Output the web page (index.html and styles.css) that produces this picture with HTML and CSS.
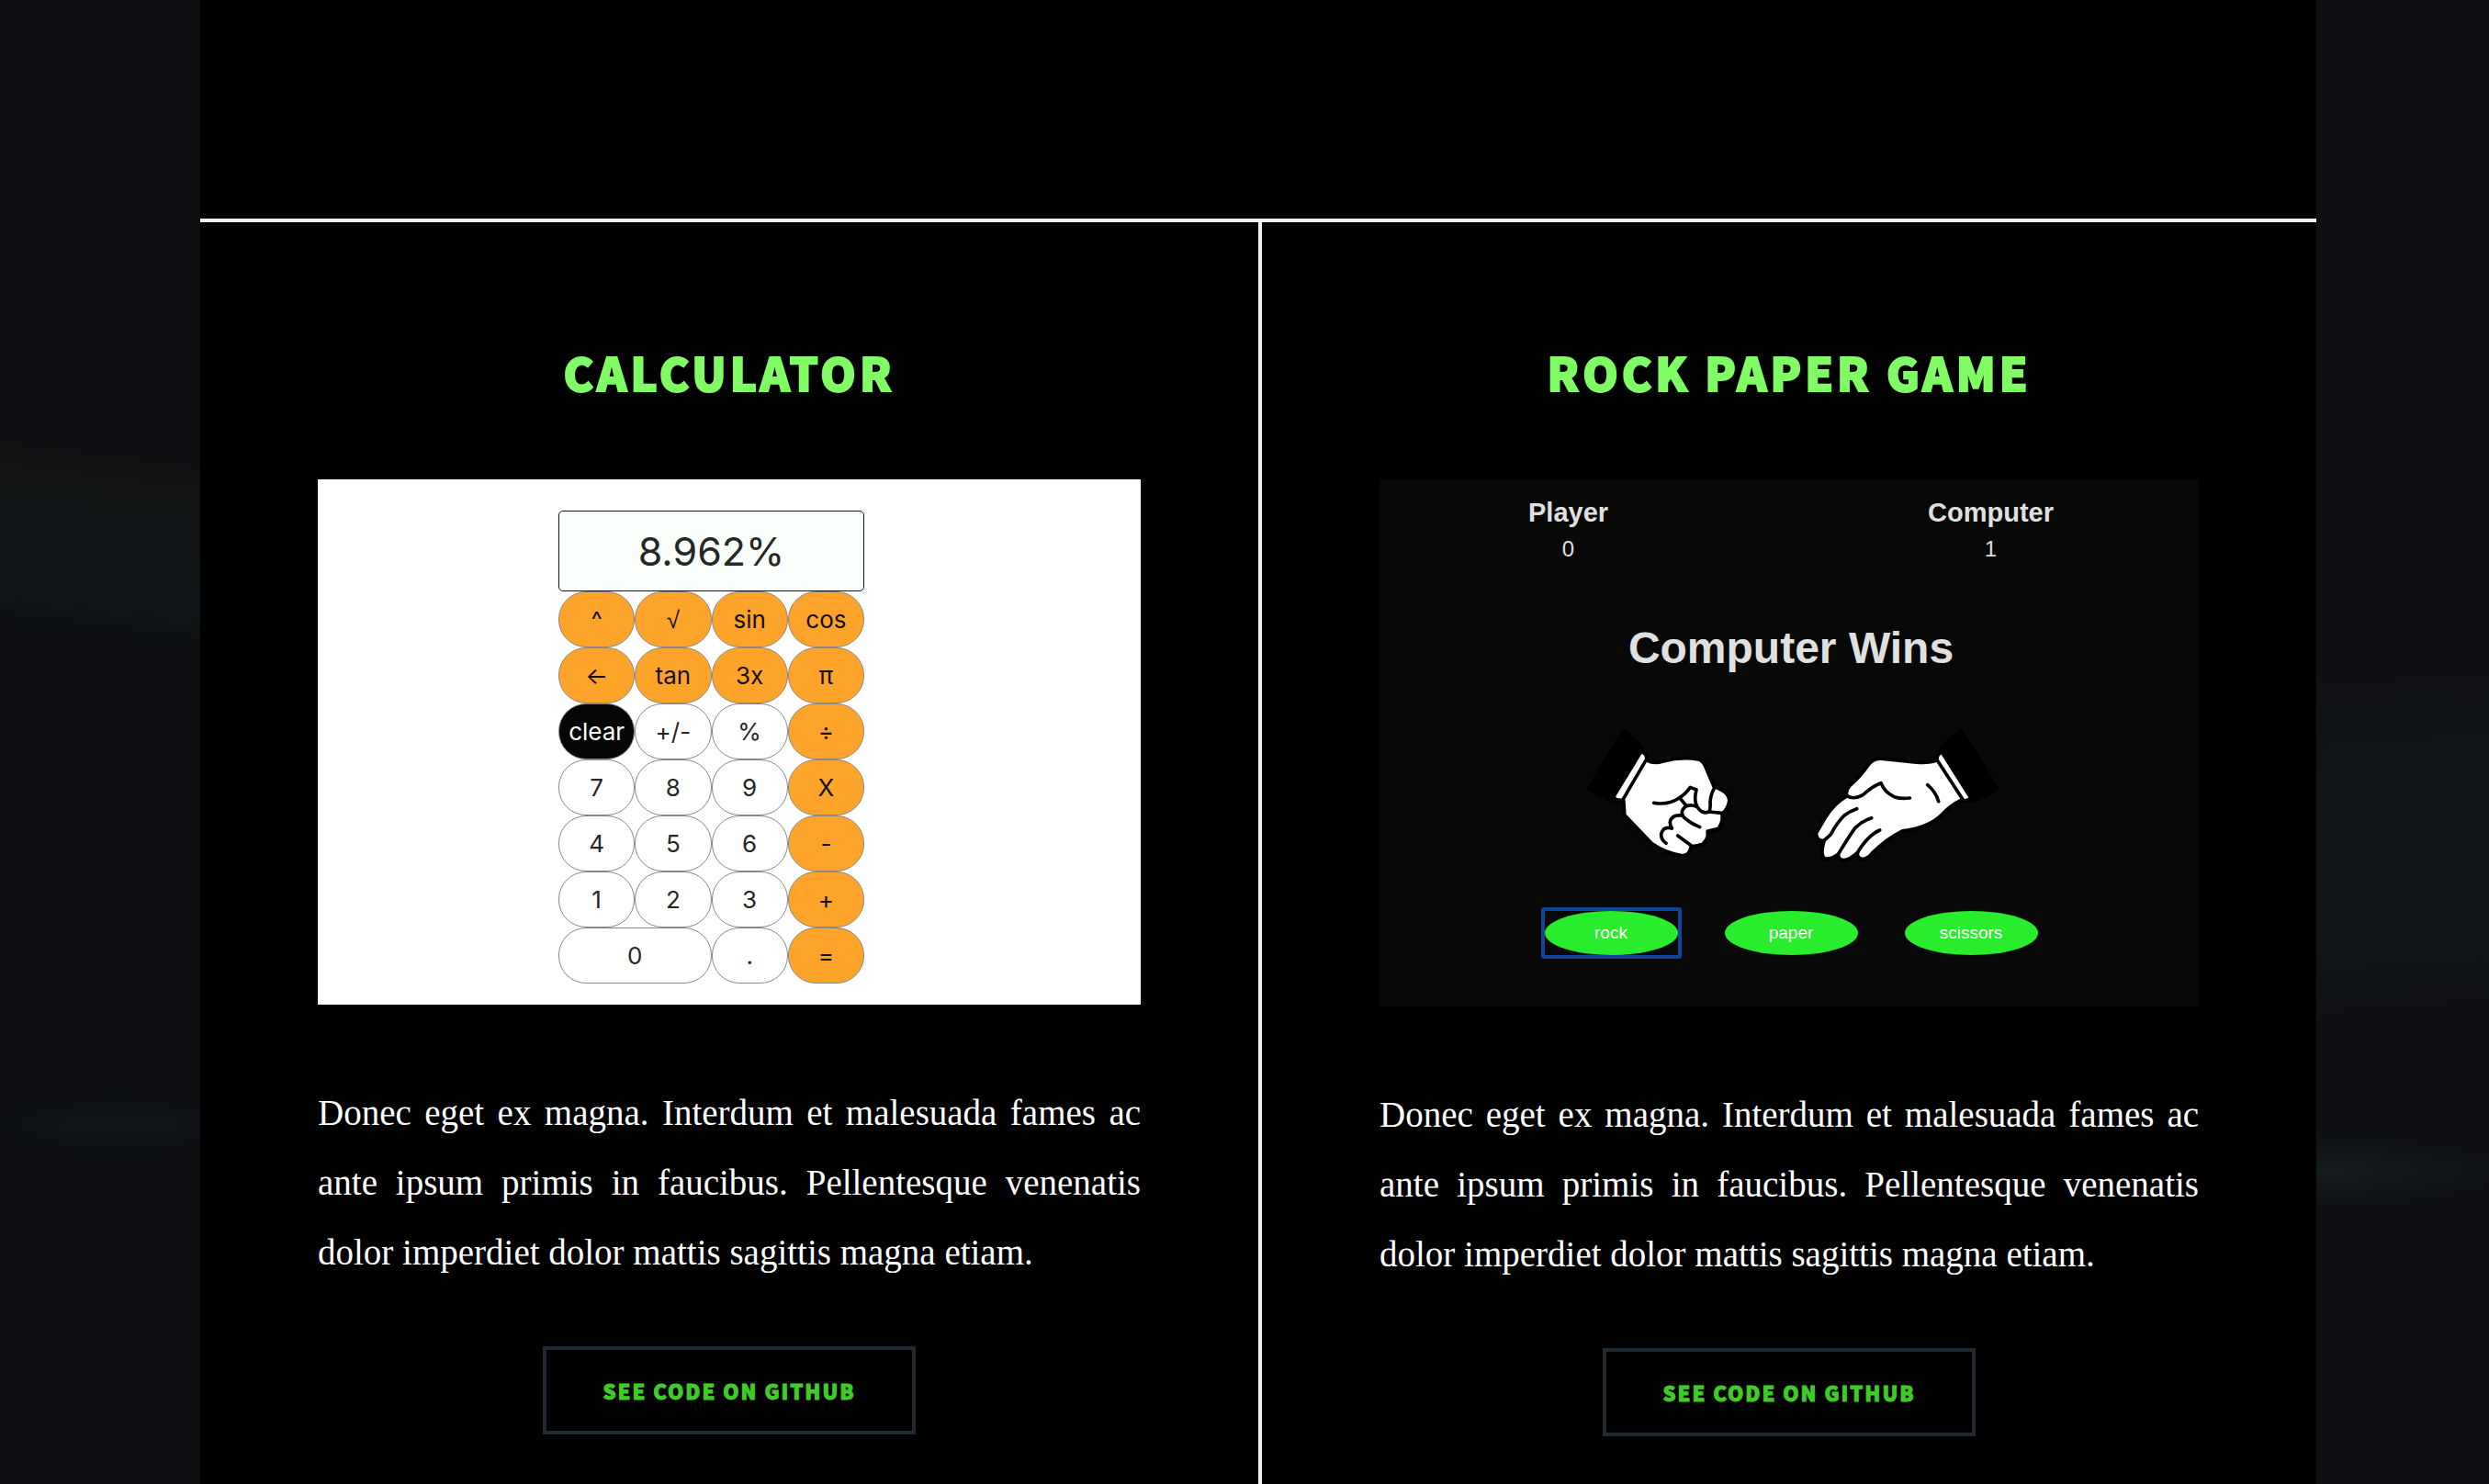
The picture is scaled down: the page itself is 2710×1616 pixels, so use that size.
FILE: index.html
```html
<!DOCTYPE html>
<html lang="en">
<head>
<meta charset="utf-8">
<meta name="viewport" content="width=device-width, initial-scale=1">
<title>Projects</title>
<link rel="stylesheet" href="styles.css">
</head>
<body>
<main class="wrapper">
  <div class="intro"></div>
  <section class="posts">
    <article class="post">
      <h2 class="post-title">Calculator</h2>
      <div class="preview preview-calculator">
        <div class="calculator">
          <output class="display">8.962%</output>
          <button class="key op" type="button">^</button>
          <button class="key op root" type="button">√</button>
          <button class="key op" type="button">sin</button>
          <button class="key op" type="button">cos</button>
          <button class="key op" type="button">←</button>
          <button class="key op" type="button">tan</button>
          <button class="key op" type="button">3x</button>
          <button class="key op" type="button">π</button>
          <button class="key clear" type="button">clear</button>
          <button class="key" type="button">+/-</button>
          <button class="key" type="button">%</button>
          <button class="key op" type="button">÷</button>
          <button class="key" type="button">7</button>
          <button class="key" type="button">8</button>
          <button class="key" type="button">9</button>
          <button class="key op" type="button">X</button>
          <button class="key" type="button">4</button>
          <button class="key" type="button">5</button>
          <button class="key" type="button">6</button>
          <button class="key op" type="button">-</button>
          <button class="key" type="button">1</button>
          <button class="key" type="button">2</button>
          <button class="key" type="button">3</button>
          <button class="key op" type="button">+</button>
          <button class="key wide" type="button">0</button>
          <button class="key" type="button">.</button>
          <button class="key op" type="button">=</button>
        </div>
      </div>
      <p class="post-text">Donec eget ex magna. Interdum et malesuada fames ac ante ipsum primis in faucibus. Pellentesque venenatis dolor imperdiet dolor mattis sagittis magna etiam.</p>
      <a class="code-link" href="#calculator">See code on GitHub</a>
    </article>
    <article class="post">
      <h2 class="post-title">Rock Paper Game</h2>
      <div class="preview preview-game">
        <div class="scores">
          <div class="score"><h3 class="score-name">Player</h3><p class="score-value">0</p></div>
          <div class="score"><h3 class="score-name">Computer</h3><p class="score-value">1</p></div>
        </div>
        <p class="result">Computer Wins</p>
        <svg class="hands" viewBox="0 0 1500 540" role="img" aria-label="Rock against paper">
          <g stroke-linecap="round" stroke-linejoin="round">
            <path fill="#000" d="M202 68L272 130V165L172 305L158 310L80 270Z"/>
            <path fill="#fff" stroke="#000" stroke-width="12" d="M257 150Q266 142 277 157L280 174Q304 186 330 177Q390 160 448 170Q463 175 471 194L499 260Q548 276 549 306Q545 332 525 350Q530 375 512 398Q498 408 478 409Q482 430 460 449Q446 454 424 456Q418 488 392 485Q340 477 296 447L206 353L203 306L187 304Q172 305 171 291Z"/>
            <path fill="none" stroke="#000" stroke-width="11" d="M277 172L200 304M302 313Q350 321 386 296Q404 285 421 262L441 270Q430 313 450 334Q464 350 482 342Q488 333 486 310Q488 285 499 266M482 342L524 346M386 296L407 321M442 325Q407 312 395 338Q390 356 411 369Q427 382 452 392M392 354Q362 350 355 374Q354 384 361 396M361 396Q335 388 327 411Q322 430 342 445M380 420L428 455M478 405L515 397"/>
            <path fill="#000" d="M1308 68L1236 126L1230 160L1335 310L1352 312L1432 270Z"/>
            <path fill="#fff" stroke="#000" stroke-width="12" d="M1243 147Q1234 148 1228 160L1226 173Q1204 183 1160 180L1045 168Q1015 166 998 194Q978 225 944 254Q927 272 932 290Q888 316 862 360L832 412Q832 438 858 436Q844 486 861 495Q878 500 904 481Q904 501 925 500Q942 498 967 476Q965 495 986 497Q1002 495 1016 477Q1060 432 1114 405Q1200 395 1245 350Q1268 323 1308 303Q1322 311 1338 297Z"/>
            <path fill="none" stroke="#000" stroke-width="11" d="M1228 174L1312 303M932 290Q955 304 985 287Q1016 258 1044 248Q1056 279 1087 293Q1111 301 1138 297M1196 254Q1223 277 1232 308M858 436L880 416Q900 378 924 354Q942 340 965 332M904 481Q937 426 960 394Q982 373 1013 362M967 476Q1000 420 1040 402"/>
          </g>
        </svg>
        <div class="moves">
          <button class="move selected" type="button">rock</button>
          <button class="move" type="button">paper</button>
          <button class="move" type="button">scissors</button>
        </div>
      </div>
      <p class="post-text">Donec eget ex magna. Interdum et malesuada fames ac ante ipsum primis in faucibus. Pellentesque venenatis dolor imperdiet dolor mattis sagittis magna etiam.</p>
      <a class="code-link" href="#rock-paper">See code on GitHub</a>
    </article>
  </section>
</main>
</body>
</html>
```
FILE: styles.css
```css
*, *::before, *::after { box-sizing: border-box; }

body {
  margin: 0;
  padding: 0 188px 0 218px;
  min-height: 100vh;
  background:
    radial-gradient(ellipse 240px 44px at 93% 1275px, #141b1f, transparent),
    radial-gradient(ellipse 160px 36px at 130px 1225px, #0f161a, transparent),
    linear-gradient(187deg, transparent 480px, #111314 540px, #0f1518 660px, transparent 710px) left / 218px 100% no-repeat,
    linear-gradient(176deg, transparent 700px, #111518 860px, #111518 1020px, transparent 1130px) right / 188px 100% no-repeat,
    #0e0f12;
}

.wrapper {
  background: #000;
  min-height: 100vh;
}

.intro {
  height: 242px;
  border-bottom: 4px solid #f0f0f0;
}

.posts {
  display: grid;
  grid-template-columns: 1fr 1fr;
}

.post {
  display: flex;
  flex-direction: column;
  align-items: center;
  padding: 128px;
}

.post + .post { border-left: 4px solid #f0f0f0; }

.post-title {
  margin: 0 0 82px;
  color: #80fc64;
  font: 900 49px/70px "Noto Sans CJK JP", sans-serif;
  letter-spacing: 4px;
  text-transform: uppercase;
  -webkit-text-stroke: 2px #80fc64;
}

.preview {
  display: flex;
  flex-direction: column;
  align-items: center;
  width: 100%;
}

.preview-calculator {
  padding: 34px 39px 23px 0;
  background: #fff;
}

.calculator {
  display: grid;
  grid-template-columns: repeat(4, 1fr);
  grid-template-rows: 88px;
  grid-auto-rows: 61px;
  width: 333px;
  font-family: Inter, sans-serif;
}

.display {
  grid-column: span 4;
  display: flex;
  align-items: center;
  justify-content: center;
  border: 1px solid #111;
  border-radius: 5px;
  background: #fafffc;
  color: #262626;
  font-size: 43px;
}

.key {
  padding: 0;
  border: 1px solid #888;
  border-radius: 30px;
  background: #fff;
  color: #262626;
  font: 400 26px/32px Inter, sans-serif;
}

.op { background: #ffa42a; color: #111; }
.root { font-family: "Liberation Sans", sans-serif; }
.clear { background: #060606; color: #fff; }
.wide { grid-column: span 2; }

.preview-game {
  padding: 16px 0 56px 4px;
  background: #080808;
  color: #e0e0e0;
  font-family: "Liberation Sans", sans-serif;
}

.scores {
  display: flex;
  justify-content: space-between;
  width: 100%;
  padding: 0 158px;
  text-align: center;
}

.score-name { margin: 0; font-size: 29px; line-height: 40px; }
.score-value { margin: 0; font-size: 24px; line-height: 40px; }

.result {
  margin: 56px 0 32px;
  font-size: 48px;
  font-weight: 700;
  line-height: 64px;
}

.hands { width: 500px; height: 180px; }

.moves {
  display: flex;
  gap: 51px;
  margin-top: 42px;
}

.move {
  position: relative;
  width: 145px;
  height: 48px;
  padding: 0;
  border: 0;
  border-radius: 50%;
  background: #28ec2c;
  color: #fff;
  font: 19px/24px "Liberation Sans", sans-serif;
}

.selected::after {
  content: "";
  position: absolute;
  inset: -4px;
  border: 4px solid #12459a;
  border-radius: 3px;
}

.post-text {
  margin: 80px 0 64px;
  color: #fff;
  font: 39px/76px "Liberation Serif", serif;
  text-align: justify;
}

.code-link {
  padding: 0 62px;
  border: 4px solid #212931;
  color: #40cc28;
  font: 900 22px/88px "Noto Sans CJK JP", sans-serif;
  letter-spacing: 2px;
  text-decoration: none;
  text-transform: uppercase;
  -webkit-text-stroke: 1px #40cc28;
}
```
